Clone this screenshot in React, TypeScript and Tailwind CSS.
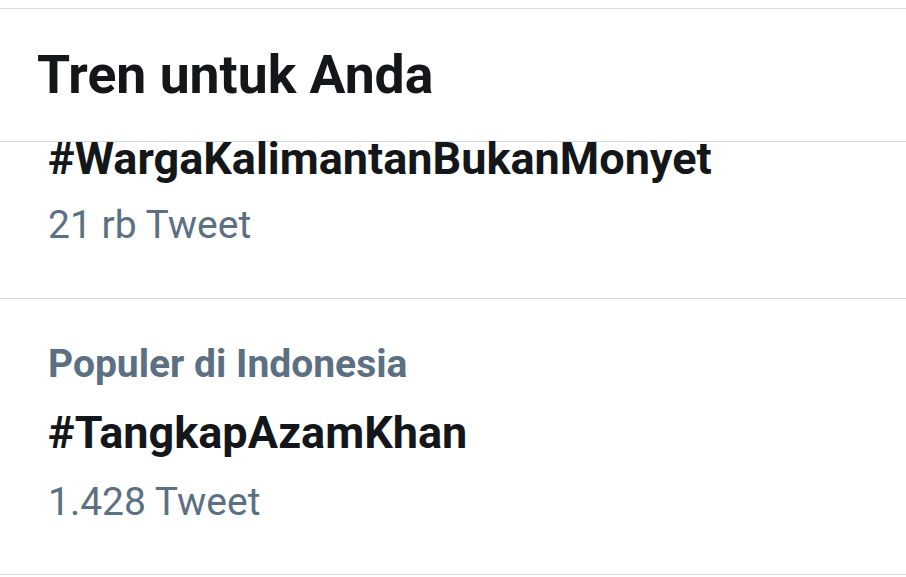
import React from 'react'

type Trend = {
  category?: string
  tag: string
  count: string
}

const TRENDS: Trend[] = [
  { tag: '#WargaKalimantanBukanMonyet', count: '21 rb Tweet' },
  { category: 'Populer di Indonesia', tag: '#TangkapAzamKhan', count: '1.428 Tweet' },
]

const TrendRow: React.FC<{ trend: Trend; first?: boolean }> = ({ trend, first }) => {
  return (
    <div className={`flex flex-col px-[48px] border-b border-[#d5d9dc] ${first ? 'pt-0 pb-[51px]' : 'pt-[43px] pb-[50px]'}`}>
      {trend.category && (
        <p className="text-[39px] leading-[44px] font-bold text-[#5b7083]">{trend.category}</p>
      )}
      <p
        className={`text-[45px] font-bold text-[#14171a] ${
          first ? 'leading-[34px]' : 'mt-[24px] leading-[46px]'
        }`}
      >
        {trend.tag}
      </p>
      <p className={`text-[39px] leading-[44px] text-[#5b7083] ${first ? 'mt-[27px]' : 'mt-[24px]'}`}>
        {trend.count}
      </p>
    </div>
  )
}

export default function App() {
  return (
    <div className="h-[577px] w-[906px] overflow-hidden bg-white font-['Roboto',sans-serif]">
      <div className="h-[8px]" />
      <header className="border-y border-[#d5d9dc] px-[37px] pt-[39px] pb-[39px]">
        <h1 className="text-[53.5px] leading-[54px] font-bold text-[#14171a]">Tren untuk Anda</h1>
      </header>
      <main className="flex flex-col">
        {TRENDS.map((t, i) => (
          <TrendRow key={t.tag} trend={t} first={i === 0} />
        ))}
      </main>
    </div>
  )
}
